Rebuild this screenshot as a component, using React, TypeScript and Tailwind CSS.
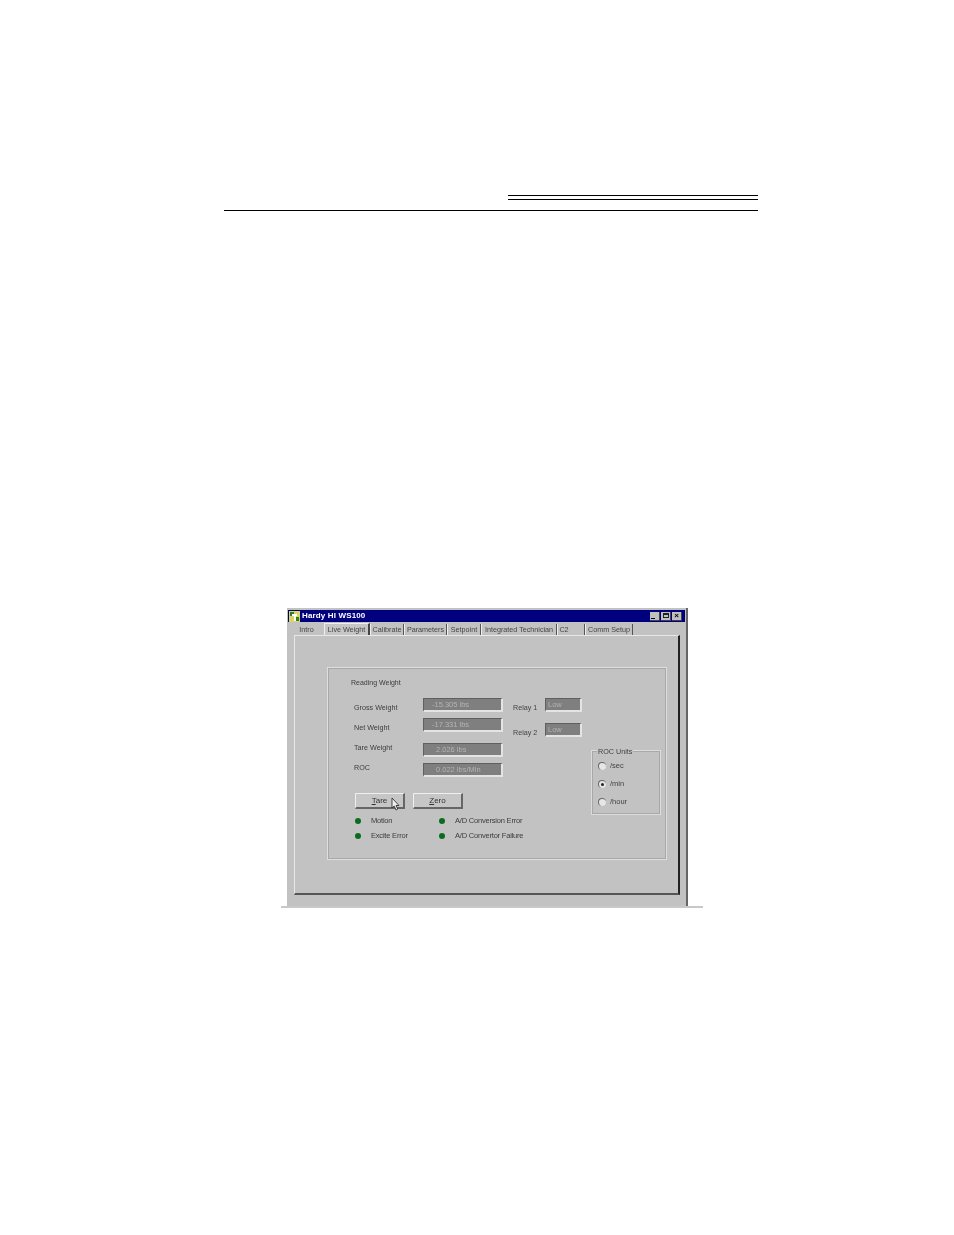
import React from "react";

const Field = ({ text, w = "w-[80px]", pl = "pl-[8px]" }: { text: string; w?: string; pl?: string }) => (
  <div className={`${w} ${pl} h-[14px] bg-[#7f7f7f] border-l border-t border-[#5f5f5f] border-r-2 border-b-2 border-r-[#e4e4e4] border-b-[#e4e4e4] text-[#b4b4b4] text-[7.5px] leading-[12px] whitespace-nowrap`}>
    {text}
  </div>
);

const Row = ({ label, value, mb, dy, pl }: { label: string; value: string; mb: string; dy: string; pl: string }) => (
  <div className={`flex items-start h-[14px] ${mb}`}>
    <div className={`w-[69px] text-[7.2px] leading-[10px] text-[#3c3c3c] ${dy}`}>{label}</div>
    <Field text={value} pl={pl} />
  </div>
);

const Led = ({ label, w }: { label: string; w: string }) => (
  <div className={`flex items-center ${w}`}>
    <span className="w-[6px] h-[6px] rounded-full bg-[#0b6b1c] ml-[1px] mr-[10px] shrink-0" />
    <span className="text-[7.5px] leading-[10px] text-[#3c3c3c] whitespace-nowrap tracking-[-0.2px]">{label}</span>
  </div>
);

const Btn = ({ children, mr }: { children: React.ReactNode; mr?: string }) => (
  <div className={`relative w-[50px] h-[16px] bg-[#c6c6c6] border-l border-t border-[#efefef] border-r-2 border-b-2 border-r-[#666] border-b-[#666] text-[8px] leading-[13px] text-center text-[#333] ${mr ?? ""}`}>
    {children}
  </div>
);

const Radio = ({ label, on, mb }: { label: string; on?: boolean; mb?: string }) => (
  <div className={`flex items-center ${mb ?? ""}`}>
    <span className="w-[8px] h-[8px] rounded-full bg-[#e6e6e6] border-l border-t border-[#666] flex items-center justify-center mr-[4px]">
      {on && <span className="w-[3px] h-[3px] rounded-full bg-[#222]" />}
    </span>
    <span className="text-[7.5px] leading-[10px] text-[#444]">{label}</span>
  </div>
);

const tabs: [string, string][] = [
  ["Calibrate", "w-[34px]"],
  ["Parameters", "w-[43px]"],
  ["Setpoint", "w-[34px]"],
  ["Integrated Technician", "w-[76px]"],
  ["C2", "w-[28px] pr-[14px]"],
  ["Comm Setup", "w-[48px]"],
];

export default function App() {
  return (
    <div className="w-[954px] h-[1235px] bg-white overflow-hidden pt-[195px] font-['Liberation_Sans',sans-serif]">
      <div className="ml-[508px] w-[250px] h-[1px] bg-black" />
      <div className="ml-[508px] w-[250px] h-[1px] bg-black mt-[3px]" />
      <div className="ml-[224px] w-[534px] h-[1px] bg-black mt-[10px]" />

      <div className="ml-[281px] w-[422px] mt-[397px] blur-[0.6px]">
        <div className="ml-[6px] w-[401px] h-[298px] bg-[#c2c2c2] border-r-2 border-r-[#666] pt-[2px] pl-[1px]">
          {/* Title bar */}
          <div className="w-[397px] h-[12px] bg-[#00007f] flex items-center">
            <svg width="11" height="11" viewBox="0 0 11 11" className="ml-[1px] shrink-0">
              <rect width="11" height="11" fill="#d8d860" />
              <rect x="1" y="1" width="4" height="4" fill="#2f7d2f" />
              <rect x="6" y="6" width="4" height="4" fill="#2f7d2f" />
              <rect x="3" y="3" width="5" height="2" fill="#fff" />
              <rect x="5" y="3" width="2" height="7" fill="#fff" />
            </svg>
            <span className="ml-[2px] text-white text-[8px] font-bold tracking-[0.15px] leading-none">Hardy HI WS100</span>
            <div className="ml-auto flex mr-[3px]">
              <div className="w-[10px] h-[9px] bg-[#c0c0c0] border-r border-b border-[#444] flex items-end pl-[1px] pb-[1px]"><span className="w-[4px] h-[1px] bg-black" /></div>
              <div className="w-[10px] h-[9px] bg-[#c0c0c0] border-r border-b border-[#444] ml-[1px] flex items-center justify-center"><span className="w-[6px] h-[5px] border border-[#222] border-t-2" /></div>
              <div className="w-[10px] h-[9px] bg-[#c0c0c0] border-r border-b border-[#444] ml-[1px] flex items-center justify-center text-[8px] leading-none font-bold text-black">×</div>
            </div>
          </div>

          {/* Tabs */}
          <div className="h-[13px] flex items-end pl-[7px] text-[7.2px] text-[#444] leading-[11px] whitespace-nowrap">
            <div className="w-[29px] h-[11px] pr-[6px] text-center">Intro</div>
            <div className="w-[46px] h-[12px] text-center border-t border-l border-[#efefef] border-r-2 border-r-[#444] bg-[#c6c6c6]">Live Weight</div>
            {tabs.map(([t, w]) => (
              <div key={t} className={`${w} h-[11px] text-center border-r border-r-[#555] border-l border-l-[#eee]`}>
                {t}
              </div>
            ))}
          </div>

          {/* Panel */}
          <div className="ml-[6px] w-[386px] h-[260px] border-l border-t border-[#e8e8e8] border-r-2 border-b-2 border-r-[#222] border-b-[#555] pt-[32px] pl-[33px]">
            {/* Group */}
            <div className="relative w-[338px] h-[191px] border border-[#a8a8a8] outline outline-[#dedede] pt-[9px] pl-[22px] flex">
              <div className="w-[241px] shrink-0">
                <div className="text-[7px] leading-[10px] text-[#3c3c3c] mb-[10px]">Reading Weight</div>
                <div className="flex ml-[3px]">
                  <div className="w-[159px]">
                    <Row label="Gross Weight" value="-15.305 lbs" pl="pl-[8px]" mb="mb-[6px]" dy="mt-[5px]" />
                    <Row label="Net Weight" value="-17.331 lbs" pl="pl-[8px]" mb="mb-[11px]" dy="mt-[5px]" />
                    <Row label="Tare Weight" value="2.026 lbs" pl="pl-[12px]" mb="mb-[6px]" dy="mt-0" />
                    <Row label="ROC" value="0.022 lbs/Min" pl="pl-[12px]" mb="" dy="mt-0" />
                  </div>
                  <div className="w-[69px]">
                    <div className="flex items-start h-[14px] mb-[11px]">
                      <span className="w-[32px] text-[7.2px] leading-[10px] text-[#444] mt-[5px]">Relay 1</span>
                      <Field text="Low" w="w-[37px]" pl="pl-[2px]" />
                    </div>
                    <div className="flex items-start h-[14px]">
                      <span className="w-[32px] text-[7.2px] leading-[10px] text-[#444] mt-[5px]">Relay 2</span>
                      <Field text="Low" w="w-[37px]" pl="pl-[2px]" />
                    </div>
                  </div>
                </div>
                <div className="flex ml-[4px] mt-[16px] mb-[7px]">
                  <Btn mr="mr-[8px]">
                    <u>T</u>are
                    <svg width="9" height="13" viewBox="0 0 9 13" className="absolute left-[35px] top-[4px]">
                      <path d="M1 0 L1 10 L3.2 8 L5 12 L6.8 11 L5 7.5 L8 7.5 Z" fill="#eee" stroke="#222" strokeWidth="0.8" />
                    </svg>
                  </Btn>
                  <Btn><u>Z</u>ero</Btn>
                </div>
                <div className="flex ml-[3px] mb-[5px]"><Led label="Motion" w="w-[84px]" /><Led label="A/D Conversion Error" w="w-[100px]" /></div>
                <div className="flex ml-[3px]"><Led label="Excite Error" w="w-[84px]" /><Led label="A/D Convertor Failure" w="w-[100px]" /></div>
              </div>
              {/* ROC Units */}
              <div className="relative w-[68px] h-[63px] mt-[73px] border border-[#a8a8a8] outline outline-[#dcdcdc] pt-[9px] pl-[5px]">
                <span className="absolute left-[4px] top-[-5px] bg-[#c2c2c2] px-[1px] text-[7.2px] leading-[10px] text-[#444]">ROC Units</span>
                <Radio label="/sec" mb="mb-[8px]" />
                <Radio label="/min" on mb="mb-[8px]" />
                <Radio label="/hour" />
              </div>
            </div>
          </div>
        </div>
        <div className="h-[2px] bg-[#c8c8c8]" />
      </div>
    </div>
  );
}
